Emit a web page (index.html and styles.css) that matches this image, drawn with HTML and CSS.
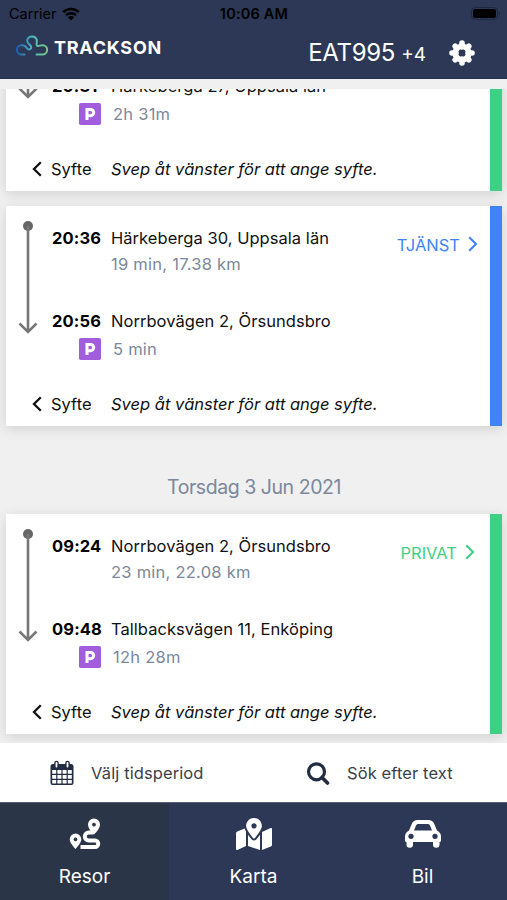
FILE: index.html
```
<!DOCTYPE html>
<html lang="sv">

<head>
  <meta charset="UTF-8">
  <meta name="viewport" content="width=device-width, initial-scale=1.0">
  <title>Trackson</title>
  <link rel="stylesheet" href="styles.css">
</head>

<body>
  <svg class="defs" width="0" height="0">
    <symbol id="track" viewBox="0 0 20 114">
      <circle cx="10" cy="6" r="5" fill="#666"/>
      <path d="M10 6V112M1.500 103.500L10 112l8.500-8.500" fill="none" stroke="#777" stroke-width="2.600"/>
    </symbol>
    <symbol id="parking" viewBox="0 0 22 22">
      <rect width="22" height="22" rx="1.800" fill="#a25ddc"/>
      <path d="M8 17V6.500h3.600a2.900 2.900 0 0 1 0 6.200H8" fill="none" stroke="#fff" stroke-width="3"/>
    </symbol>
    <symbol id="left" viewBox="0 0 10 16">
      <path d="M8.800 1.200L2 8l6.800 6.800" fill="none" stroke="currentColor" stroke-width="2.300"/>
    </symbol>
    <symbol id="right" viewBox="0 0 10 16">
      <path d="M1.200 1.200L8 8l-6.800 6.800" fill="none" stroke="currentColor" stroke-width="2.100"/>
    </symbol>
  </svg>

  <header class="header">
    <div class="status">
      <div class="carrier">
        <span class="carrier-name">Carrier</span>
        <svg width="18" height="14" viewBox="0 0 18 14">
          <path d="M1.200 5.200a11.200 11.200 0 0 1 15.600 0M4 8.200a7.200 7.200 0 0 1 10 0" fill="none" stroke="#000" stroke-width="2.400"/>
          <path d="M9 13.500L5.800 10.300a4.600 4.600 0 0 1 6.400 0z"/>
        </svg>
      </div>
      <span class="clock">10:06 AM</span>
      <svg class="battery" width="30" height="14" viewBox="0 0 30 14">
        <rect x=".5" y=".5" width="26" height="12" rx="3.500" fill="none" stroke="#1d2740"/>
        <rect x="2" y="2" width="23" height="9" rx="2"/>
        <path d="M28 4.500q2 2 0 4z" fill="#1d2740"/>
      </svg>
    </div>
    <div class="bar">
      <div class="logo">
        <svg width="32" height="22" viewBox="0 0 32 22">
          <defs>
            <linearGradient id="cloud" x1="0" x2="1" y1="0" y2="0">
              <stop offset="0" stop-color="#1d5fa8"/>
              <stop offset=".5" stop-color="#4bb8c4"/>
              <stop offset="1" stop-color="#7cc880"/>
            </linearGradient>
          </defs>
          <path d="M8.500 20.500H6A4.600 4.600 0 0 1 5 11.300C8.500 10.600 9.500 12 10.500 13.800C12 16.500 16 15.500 15 12.500C14.200 10.500 10.800 9.500 11.200 6A5 5 0 0 1 20.800 6C21.200 8.500 19.500 11.500 21.500 12C23.500 12.300 24.500 10.800 27 11.300A4.600 4.600 0 0 1 26 20.500H20.500" fill="none" stroke="url(#cloud)" stroke-width="2" stroke-linecap="round"/>
        </svg>
        <span class="logo-text">TRACKSON</span>
      </div>
      <div class="vehicle"><span class="plate">EAT995</span><span class="more">+4</span></div>
      <svg class="gear" width="26" height="26" viewBox="0 0 26 26">
        <g stroke="#fff" stroke-width="5.600" stroke-linecap="round">
          <path d="M13 3v4M13 19v4M3 13h4M19 13h4M6.200 6.200l2 2M17.800 17.800l2 2M6.200 19.800l2-2M17.800 8.200l2-2"/>
        </g>
        <circle cx="13" cy="13" r="6.800" fill="none" stroke="#fff" stroke-width="5.600"/>
      </svg>
    </div>
  </header>

  <main class="list">
    <article class="trip private">
      <svg class="track"><use href="#track"/></svg>
      <span class="time end">20:31</span>
      <span class="place end">Härkeberga 27, Uppsala län</span>
      <svg class="parking"><use href="#parking"/></svg>
      <span class="parked">2h 31m</span>
      <div class="purpose"><svg class="chevron"><use href="#left"/></svg>Syfte</div>
      <em class="hint">Svep åt vänster för att ange syfte.</em>
    </article>

    <article class="trip work">
      <svg class="track"><use href="#track"/></svg>
      <span class="time">20:36</span>
      <span class="place">Härkeberga 30, Uppsala län</span>
      <span class="meta">19 min, 17.38 km</span>
      <div class="kind">TJÄNST<svg class="chevron"><use href="#right"/></svg></div>
      <span class="time end">20:56</span>
      <span class="place end">Norrbovägen 2, Örsundsbro</span>
      <svg class="parking"><use href="#parking"/></svg>
      <span class="parked">5 min</span>
      <div class="purpose"><svg class="chevron"><use href="#left"/></svg>Syfte</div>
      <em class="hint">Svep åt vänster för att ange syfte.</em>
    </article>

    <h2 class="date">Torsdag 3 Jun 2021</h2>

    <article class="trip private">
      <svg class="track"><use href="#track"/></svg>
      <span class="time">09:24</span>
      <span class="place">Norrbovägen 2, Örsundsbro</span>
      <span class="meta">23 min, 22.08 km</span>
      <div class="kind">PRIVAT<svg class="chevron"><use href="#right"/></svg></div>
      <span class="time end">09:48</span>
      <span class="place end">Tallbacksvägen 11, Enköping</span>
      <svg class="parking"><use href="#parking"/></svg>
      <span class="parked">12h 28m</span>
      <div class="purpose"><svg class="chevron"><use href="#left"/></svg>Syfte</div>
      <em class="hint">Svep åt vänster för att ange syfte.</em>
    </article>
  </main>

  <div class="filters">
    <div class="filter period">
      <svg width="24" height="26" viewBox="0 0 24 26">
        <path fill="#232c42" d="M3 4h18a2.500 2.500 0 0 1 2.500 2.500V23a2 2 0 0 1-2 2h-19a2 2 0 0 1-2-2V6.500A2.500 2.500 0 0 1 3 4z"/>
        <path fill="#fff" d="M2.200 10h4v3.800h-4zM7.400 10h4v3.800h-4zM12.600 10h4v3.800h-4zM17.800 10h4v3.800h-4zM2.200 15h4v3.800h-4zM7.400 15h4v3.800h-4zM12.600 15h4v3.800h-4zM17.800 15h4v3.800h-4zM2.200 20h4v3.500h-4zM7.400 20h4v3.500h-4zM12.600 20h4v3.500h-4zM17.800 20h4v3.500h-4z"/>
        <path d="M6.500 3v3.500M17.500 3v3.500" stroke="#232c42" stroke-width="4.600" stroke-linecap="round"/>
        <path d="M6.500 3v3.500M17.500 3v3.500" stroke="#fff" stroke-width="1.800" stroke-linecap="round"/>
      </svg>
      Välj tidsperiod
    </div>
    <div class="filter search">
      <svg width="24" height="24" viewBox="0 0 24 24">
        <path d="M16 16.500l5.500 5.500" stroke="#232c42" stroke-width="3.600" stroke-linecap="round"/>
        <circle cx="10.500" cy="10.800" r="8" fill="none" stroke="#232c42" stroke-width="3.200"/>
      </svg>
      Sök efter text
    </div>
  </div>

  <nav class="tabs">
    <div class="tab active">
      <svg width="32" height="32" viewBox="0 0 32 32">
        <path d="M24.500 14.500H19.800a4 4 0 0 0 0 8H26a3.250 3.250 0 0 1 0 6.500H11.500" fill="none" stroke="#fff" stroke-width="4"/>
        <path fill="#fff" fill-rule="evenodd" d="M25 .5a6 6 0 0 1 6 6c0 3.500-3.500 7.500-6 10-2.500-2.500-6-6.500-6-10a6 6 0 0 1 6-6zm0 4.200a1.900 1.900 0 1 0 .01 0zM6.500 15.500a5.800 5.800 0 0 1 5.800 5.800c0 3.200-3.300 7-5.800 9.700-2.500-2.700-5.800-6.500-5.800-9.700a5.800 5.800 0 0 1 5.800-5.800zm0 4a1.900 1.900 0 1 0 .01 0z"/>
      </svg>
      Resor
    </div>
    <div class="tab">
      <svg width="36" height="32" viewBox="0 0 576 512">
        <path fill="#fff" d="M288 0c-69.600 0-126 56.400-126 126 0 56.300 82.400 158.800 113.900 196 6.400 7.500 17.800 7.500 24.200 0C331.600 284.800 414 182.300 414 126 414 56.400 357.600 0 288 0zm0 168c-23.200 0-42-18.800-42-42s18.800-42 42-42 42 18.800 42 42-18.800 42-42 42zM20.100 216A32 32 0 0 0 0 245.700v250.300c0 11.300 11.400 19.100 21.900 14.900L160 448V214.900c-8.800-16-16.100-31.500-21.200-46.300L20.100 216zM288 359.700c-14.100 0-27.400-6.200-36.500-17-19.700-23.200-40.600-49.600-59.500-76.700v182l192 64V266c-18.900 27.100-39.800 53.500-59.500 76.700-9.100 10.800-22.400 17-36.500 17zM554.100 161.200L416 224v288l139.900-56A32 32 0 0 0 576 426.300V176c0-11.300-11.400-19.100-21.900-14.800z"/>
      </svg>
      Karta
    </div>
    <div class="tab">
      <svg width="36" height="32" viewBox="0 0 36 32">
        <path fill="#fff" fill-rule="evenodd" d="M4 12.500L6.500 6.500Q8 2 12.500 2h11Q28 2 29.500 6.500L32 12.500Q36 14.500 36 18.500v4q0 1.500-1.500 1.500V26.500a3 3 0 0 1-6.500 0V24H8v2.500a3 3 0 0 1-6.500 0V24Q0 24 0 22.500V18.500q0-4 4-6zM9 12.500h18l-2-5Q24.500 6 23 6H13q-1.500 0-2 1.500zM6 15.700a2.700 2.700 0 1 0 .01 0zM30 15.700a2.700 2.700 0 1 0 .01 0z"/>
      </svg>
      Bil
    </div>
  </nav>
</body>

</html>
```
FILE: styles.css
```
* {
  box-sizing: border-box;
}

body {
  margin: 0;
  height: 900px;
  display: flex;
  flex-direction: column;
  overflow: hidden;
  background-color: #f0f0f0;
  color: #111;
  font-family: Inter, "Liberation Sans", sans-serif;
  font-size: 16.5px;
}

.defs {
  position: absolute;
}

/* header */
.header {
  height: 79px;
  flex: none;
  background-color: #2c3855;
  border-bottom: 1px solid #25304c;
}

.status {
  height: 27px;
  padding: 0 6px 0 9px;
  display: grid;
  grid-template-columns: 1fr auto 1fr;
  align-items: center;
  color: #000;
  font-size: 14.5px;
}

.carrier {
  display: flex;
  align-items: center;
  gap: 5px;
}

.clock {
  margin-left: -2px;
  font-weight: 600;
  letter-spacing: .2px;
}

.battery {
  justify-self: end;
}

.bar {
  height: 51px;
  padding: 0 32px 0 16px;
  display: flex;
  align-items: center;
  color: #fff;
}

.logo {
  display: flex;
  align-items: center;
  margin: -10px auto 0 0;
  gap: 6px;
}

.logo svg {
  margin-top: -5px;
}

.logo-text {
  font-weight: 700;
  font-size: 18px;
  letter-spacing: .75px;
}

.plate {
  font-size: 24px;
  letter-spacing: -.3px;
}

.more {
  margin-left: 6px;
  font-size: 19px;
}

.gear {
  margin-left: 23px;
}

/* trips */
.list {
  flex: none;
  height: 654px;
  margin-top: 10px;
  padding: 0 5px 0 6px;
  display: flex;
  flex-direction: column;
  overflow: hidden;
}

.trip {
  flex: none;
  height: 220px;
  margin-bottom: 15px;
  padding-top: 19px;
  display: grid;
  grid-template-columns: 46px 59px 1fr auto;
  grid-template-rows: 26px 26px 31px 26px 29px 28px 26px;
  align-items: center;
  background-color: #fff;
  border-right: 12px solid;
  box-shadow: 0 3px 12px rgba(0, 0, 0, .13);
}

.trip:first-child {
  margin-top: -118px;
}

.work {
  border-color: #4083f6;
}

.private {
  border-color: #3dd185;
}

.track {
  grid-area: 1 / 1 / 6 / 2;
  align-self: start;
  width: 20px;
  height: 114px;
  margin: -5px 0 0 12px;
}

.time {
  grid-area: 1 / 2;
  font-weight: 700;
  letter-spacing: .15px;
  color: #000;
}

.place {
  grid-area: 1 / 3;
  letter-spacing: .04px;
}

.time.end,
.place.end {
  grid-row: 4;
}

.meta,
.parked {
  grid-area: 2 / 3;
  letter-spacing: .25px;
  color: #7b879b;
}

.parked {
  grid-row: 5;
  margin-left: 2px;
}

.parking {
  grid-area: 5 / 2;
  width: 22px;
  height: 22px;
  margin-left: 27px;
}

.kind {
  grid-area: 1 / 4 / 3 / 5;
  display: flex;
  align-items: center;
  gap: 8px;
  margin: -12px 12px 0 0;
}

.work .kind {
  color: #4083f6;
}

.private .kind {
  margin-right: 15px;
  color: #3dd185;
}

.chevron {
  width: 10px;
  height: 16px;
}

.kind .chevron {
  margin-top: -3px;
}

.purpose {
  grid-area: 7 / 1 / 8 / 3;
  display: flex;
  align-items: center;
  gap: 9px;
  margin-left: 26px;
}

.hint {
  grid-area: 7 / 3;
}

.date {
  flex: none;
  height: 73px;
  margin: 0;
  padding-top: 18px;
  line-height: 57px;
  text-align: center;
  font-size: 19.5px;
  font-weight: 400;
  letter-spacing: -.45px;
  color: #7b879b;
}

/* filters */
.filters {
  flex: none;
  height: 59px;
  display: flex;
  background-color: #fff;
  color: #3c4048;
  letter-spacing: .1px;
}

.filter {
  display: flex;
  align-items: center;
  gap: 17px;
}

.period {
  width: 256px;
  padding-left: 50px;
}

.search {
  padding-left: 50px;
}

/* tabs */
.tabs {
  flex: 1;
  display: grid;
  grid-template-columns: repeat(3, 1fr);
  border-top: 1px solid #555f76;
  background-color: #2c3855;
}

.tab {
  display: flex;
  flex-direction: column;
  align-items: center;
  padding-top: 15px;
  gap: 15px;
  color: #fff;
  font-size: 19px;
}

.active {
  background-color: #2a3547;
}
```
